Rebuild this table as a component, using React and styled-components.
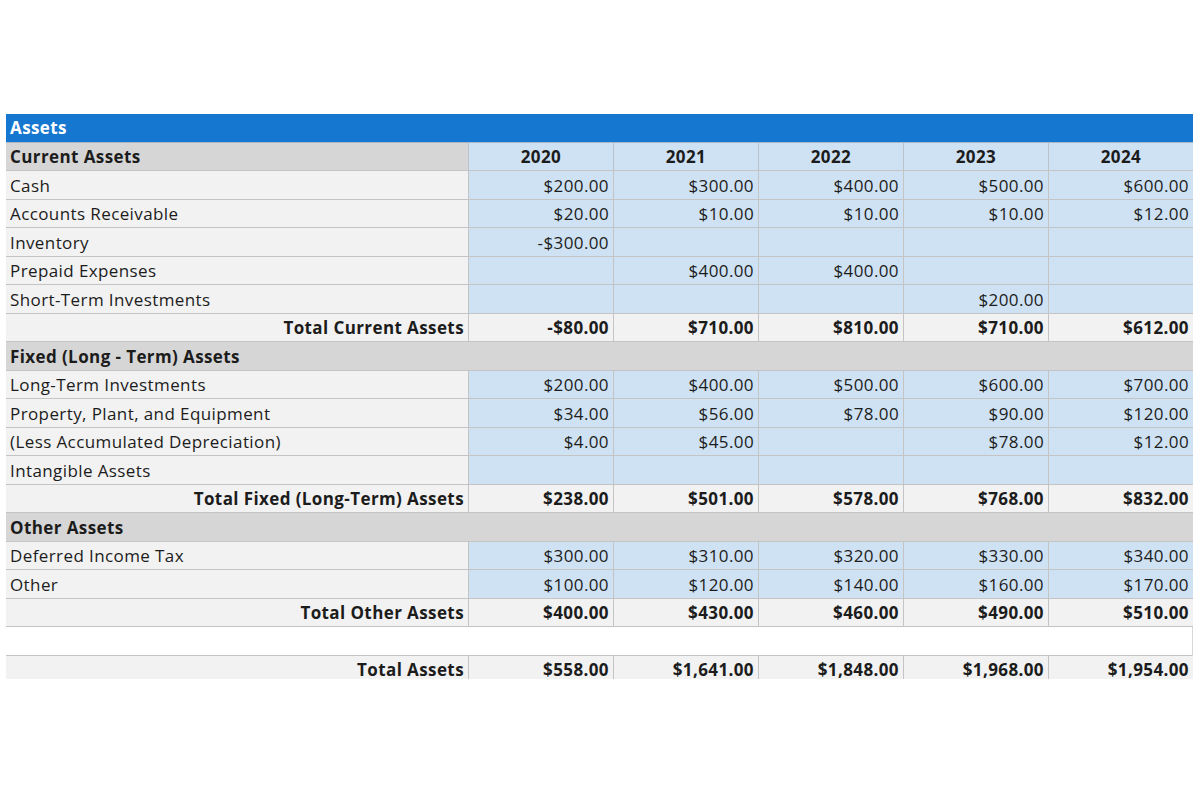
import styled, { createGlobalStyle } from "styled-components";

const GlobalStyle = createGlobalStyle`
	body {
		margin: 0;
		background: #ffffff;
		font-family: "Open Sans", "Noto Sans", sans-serif;
	}
`;

const years = ["2020", "2021", "2022", "2023", "2024"];

const rows = [
	{ type: "section", label: "Current Assets", years: true },
	{ type: "item", label: "Cash", values: ["$200.00", "$300.00", "$400.00", "$500.00", "$600.00"] },
	{ type: "item", label: "Accounts Receivable", values: ["$20.00", "$10.00", "$10.00", "$10.00", "$12.00"] },
	{ type: "item", label: "Inventory", values: ["-$300.00", "", "", "", ""] },
	{ type: "item", label: "Prepaid Expenses", values: ["", "$400.00", "$400.00", "", ""] },
	{ type: "item", label: "Short-Term Investments", values: ["", "", "", "$200.00", ""] },
	{ type: "total", label: "Total Current Assets", values: ["-$80.00", "$710.00", "$810.00", "$710.00", "$612.00"] },
	{ type: "section", label: "Fixed (Long - Term) Assets" },
	{ type: "item", label: "Long-Term Investments", values: ["$200.00", "$400.00", "$500.00", "$600.00", "$700.00"] },
	{ type: "item", label: "Property, Plant, and Equipment", values: ["$34.00", "$56.00", "$78.00", "$90.00", "$120.00"] },
	{ type: "item", label: "(Less Accumulated Depreciation)", values: ["$4.00", "$45.00", "", "$78.00", "$12.00"] },
	{ type: "item", label: "Intangible Assets", values: ["", "", "", "", ""] },
	{ type: "total", label: "Total Fixed (Long-Term) Assets", values: ["$238.00", "$501.00", "$578.00", "$768.00", "$832.00"] },
	{ type: "section", label: "Other Assets" },
	{ type: "item", label: "Deferred Income Tax", values: ["$300.00", "$310.00", "$320.00", "$330.00", "$340.00"] },
	{ type: "item", label: "Other", values: ["$100.00", "$120.00", "$140.00", "$160.00", "$170.00"] },
	{ type: "total", label: "Total Other Assets", values: ["$400.00", "$430.00", "$460.00", "$490.00", "$510.00"] },
	{ type: "blank" },
	{ type: "total", label: "Total Assets", values: ["$558.00", "$1,641.00", "$1,848.00", "$1,968.00", "$1,954.00"] },
];

export default function App() {
	return (
		<>
			<GlobalStyle />
			<Page>
				<Sheet>
					<TitleRow>Assets</TitleRow>
					{rows.map((row, i) => {
						if (row.type === "blank") return <BlankRow key={i} />;
						if (row.type === "section") {
							return (
								<Row key={i}>
									<SectionCell $wide={!row.years}>{row.label}</SectionCell>
									{row.years &&
										years.map((y) => <YearCell key={y}>{y}</YearCell>)}
								</Row>
							);
						}
						const total = row.type === "total";
						return (
							<Row key={i}>
								<LabelCell $total={total}>{row.label}</LabelCell>
								{row.values.map((v, j) => (
									<ValueCell key={j} $total={total}>
										{v}
									</ValueCell>
								))}
							</Row>
						);
					})}
				</Sheet>
			</Page>
		</>
	);
}

const Page = styled.div`
	padding-top: 114px;
	padding-left: 6px;
`;

const Sheet = styled.div`
	width: 1187px;
	height: 565px;
	overflow: hidden;
	font-size: 17px;
	letter-spacing: 0.4px;
	color: #1c1c1c;
`;

const TitleRow = styled.div`
	height: 28.5px;
	box-sizing: border-box;
	background: #1677d0;
	color: #ffffff;
	font-weight: 700;
	padding-left: 4px;
	display: flex;
	align-items: center;
	border-bottom: 1px solid #a9b9c9;
`;

const Row = styled.div`
	display: grid;
	grid-template-columns: 462px repeat(5, 145px);
	height: 28.5px;
`;

const Cell = styled.div`
	box-sizing: border-box;
	border-bottom: 1px solid #c4c4c4;
	display: flex;
	align-items: center;
	padding: 1px 4px 0;
	white-space: nowrap;
`;

const SectionCell = styled(Cell)`
	grid-column: ${(p) => (p.$wide ? "1 / -1" : "auto")};
	background: #d6d6d6;
	font-weight: 700;
`;

const YearCell = styled(Cell)`
	background: #cfe2f3;
	border-left: 1px solid #bcc3ca;
	justify-content: center;
	font-weight: 700;
`;

const LabelCell = styled(Cell)`
	background: #f2f2f2;
	justify-content: ${(p) => (p.$total ? "flex-end" : "flex-start")};
	font-weight: ${(p) => (p.$total ? 700 : 400)};
`;

const ValueCell = styled(Cell)`
	background: ${(p) => (p.$total ? "#f2f2f2" : "#cfe2f3")};
	border-left: 1px solid #c4c4c4;
	justify-content: flex-end;
	font-weight: ${(p) => (p.$total ? 700 : 400)};
`;

const BlankRow = styled.div`
	height: 28.5px;
	box-sizing: border-box;
	background: #ffffff;
	border-bottom: 1px solid #c4c4c4;
	border-right: 1px solid #d8d8d8;
`;
